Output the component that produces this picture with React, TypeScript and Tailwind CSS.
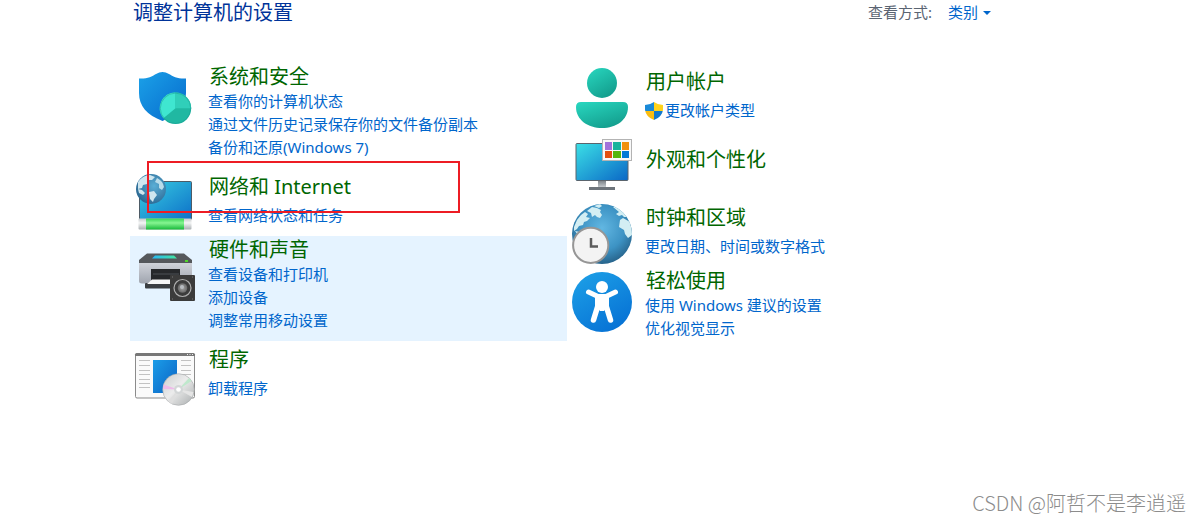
import React from 'react';

type CategoryData = {
  id: string;
  title: string;
  icon: React.ReactNode;
  links: string[];
  active?: boolean;
  marked?: boolean;
  shield?: boolean;
};

const Icon: React.FC<{ children: React.ReactNode }> = ({ children }) => (
  <svg
    viewBox="0 0 60 60"
    className="mt-1 h-[60px] w-[60px] shrink-0 overflow-visible"
    aria-hidden="true"
  >
    {children}
  </svg>
);

const SecurityIcon = () => (
  <Icon>
    <defs>
      <linearGradient id="sec-shield" x1="0" y1="0" x2="1" y2="1">
        <stop offset="0" stopColor="#1ba1e8" />
        <stop offset="1" stopColor="#0669cc" />
      </linearGradient>
    </defs>
    <path
      d="M4 11.5C12 12 17 9.500 21 7Q27.500 3 34 7C38 9.500 43 12 51 11.500V26C51 39 42 48 27.500 54C12 48 4 39 4 26Z"
      fill="url(#sec-shield)"
    />
    <circle cx="40.500" cy="41.300" r="15.700" fill="#20b8a2" />
    <path d="M40.500 41.300V25.600A15.700 15.700 0 0 0 28.400 51.300Z" fill="#3fe6d0" />
    <path d="M40.500 41.300V25.600A15.700 15.700 0 0 1 56.200 41.300Z" fill="#30cfb9" />
    <circle cx="40.500" cy="41.300" r="15.200" fill="none" stroke="#1a9c92" strokeOpacity="0.5" />
  </Icon>
);

const NetworkIcon = () => (
  <Icon>
    <defs>
      <linearGradient id="net-screen" x1="0" y1="0" x2="1" y2="1">
        <stop offset="0" stopColor="#39cfe2" />
        <stop offset="1" stopColor="#0d70c8" />
      </linearGradient>
      <radialGradient id="net-globe" cx="0.6" cy="0.4" r="0.65">
        <stop offset="0" stopColor="#5aaed6" />
        <stop offset="1" stopColor="#2b6792" />
      </radialGradient>
      <linearGradient id="net-pipe" x1="0" y1="0" x2="0" y2="1">
        <stop offset="0" stopColor="#3ad457" />
        <stop offset="0.4" stopColor="#86f592" />
        <stop offset="1" stopColor="#18b93a" />
      </linearGradient>
      <linearGradient id="net-cap" x1="0" y1="0" x2="0" y2="1">
        <stop offset="0" stopColor="#c5c9cb" />
        <stop offset="0.4" stopColor="#f4f5f5" />
        <stop offset="1" stopColor="#aab0b3" />
      </linearGradient>
    </defs>
    <rect x="4.500" y="9.500" width="52" height="38" rx="1" fill="url(#net-screen)" stroke="#4d5b66" />
    <circle cx="16" cy="17" r="15" fill="url(#net-globe)" />
    <path d="M3 10Q8 3 15 3L20 5 17 8 14 8 12 12 8 13 7 16 3 17Z" fill="#cfe6ef" />
    <path d="M14 20L19 19 22 23 19 27 18 30 15 27Z" fill="#cfe6ef" />
    <path d="M3 17L7 18 10 21 8 23 4 21Z" fill="#cfe6ef" />
    <path d="M22 6Q28 9 29 15L27 18 24 16 24 12 20 10Z" fill="#b9dcea" />
    <rect x="3.500" y="46.500" width="53" height="11" rx="1" fill="url(#net-cap)" />
    <rect x="11" y="46.500" width="38" height="11" fill="url(#net-pipe)" />
  </Icon>
);

const HardwareIcon = () => (
  <Icon>
    <defs>
      <linearGradient id="hw-body" x1="0" y1="0" x2="0" y2="1">
        <stop offset="0" stopColor="#d0d3da" />
        <stop offset="1" stopColor="#9fa4ae" />
      </linearGradient>
      <linearGradient id="hw-slot" x1="0" y1="0" x2="1" y2="0">
        <stop offset="0" stopColor="#27b8f5" />
        <stop offset="1" stopColor="#43e6a0" />
      </linearGradient>
      <radialGradient id="hw-cone">
        <stop offset="0" stopColor="#a8a8a8" />
        <stop offset="1" stopColor="#686868" />
      </radialGradient>
    </defs>
    <path d="M12 13.500H49L57 20V24H4V20Z" fill="#55585c" />
    <path d="M20 15.500H39L42 18.500H17Z" fill="url(#hw-slot)" />
    <path d="M4 23H57V41Q57 43.500 54 43.500H7Q4 43.500 4 41Z" fill="url(#hw-body)" />
    <rect x="50" y="20" width="3" height="2" fill="#4fd52a" />
    <rect x="10" y="43" width="40" height="5.500" rx="1" fill="#3b3e42" />
    <path d="M16 29H45V41H16Z" fill="#26282b" />
    <path d="M18 33H44V35H18Z" fill="#393c40" />
    <path d="M17 39.500H44V44H12Z" fill="#f6f6f6" />
    <rect x="35" y="35" width="25" height="26" rx="1" fill="#3b3b3b" />
    <circle cx="47.500" cy="48" r="8.500" fill="#3c3c3c" stroke="#b0b0b0" strokeWidth="1.200" />
    <circle cx="47.500" cy="48" r="4.800" fill="url(#hw-cone)" />
    <circle cx="47" cy="47" r="2" fill="#b9bdc2" />
    <path d="M37 37h1M57 37h1M37 59h1M57 59h1" stroke="#777" />
  </Icon>
);

const ProgramsIcon = () => (
  <Icon>
    <defs>
      <linearGradient id="prg-page" x1="0" y1="0" x2="1" y2="1">
        <stop offset="0" stopColor="#1b9de8" />
        <stop offset="1" stopColor="#0b62c4" />
      </linearGradient>
      <linearGradient id="prg-disc" x1="0" y1="0" x2="1" y2="1">
        <stop offset="0" stopColor="#c9cccd" />
        <stop offset="0.45" stopColor="#ececec" />
        <stop offset="1" stopColor="#a9adae" />
      </linearGradient>
    </defs>
    <rect x="0.500" y="8.500" width="59" height="44.500" rx="1.500" fill="#fafafa" stroke="#8b8b8b" />
    <path d="M0 11V9.500Q0 8 2 8H58Q60 8 60 9.500V11Z" fill="#777" />
    <path d="M52 9.500h1M54.500 9.500h1M57 9.500h1" stroke="#eee" />
    <path
      d="M4 15.500H15M4 20.500H15M4 25.500H15M4 29.500H15M4 34.500H15M4 38.500H15M4 42.500H15M46 15.500H56M46 20.500H56M46 25.500H56M46 29.500H56"
      stroke="#c2c2c2"
    />
    <rect x="18" y="15" width="24" height="33" fill="url(#prg-page)" />
    <circle cx="43.500" cy="44.500" r="15.800" fill="url(#prg-disc)" stroke="#a5a8a9" strokeWidth="0.600" />
    <path d="M43.500 44.500L28.500 39.500 28 44Z" fill="#eebbe9" />
    <path d="M43.500 44.500L54 33 56.500 36Z" fill="#bfe8cc" />
    <path d="M43.500 44.500L58.500 47 57 52Z" fill="#e5e5e5" />
    <path d="M43.500 44.500L33 56 37 59Z" fill="#dedede" />
    <circle cx="43.500" cy="44.500" r="4.500" fill="#d3d6d7" />
    <circle cx="43.500" cy="44.500" r="2.300" fill="#fff" />
  </Icon>
);

const UserIcon = () => (
  <Icon>
    <defs>
      <linearGradient id="usr" x1="0.200" y1="0" x2="0.800" y2="1">
        <stop offset="0" stopColor="#27d3bc" />
        <stop offset="1" stopColor="#129a8a" />
      </linearGradient>
    </defs>
    <circle cx="30" cy="16" r="15" fill="url(#usr)" />
    <path d="M9 35H51Q56 35 56 40C56 53 44 61 30 61C16 61 4 53 4 40Q4 35 9 35Z" fill="url(#usr)" />
  </Icon>
);

const AppearanceIcon = () => (
  <Icon>
    <defs>
      <linearGradient id="app-screen" x1="0" y1="0" x2="1" y2="1">
        <stop offset="0" stopColor="#3be0e6" />
        <stop offset="1" stopColor="#0a67c6" />
      </linearGradient>
      <linearGradient id="app-neck" x1="0" y1="0" x2="0" y2="1">
        <stop offset="0" stopColor="#7f858b" />
        <stop offset="1" stopColor="#c3c8cc" />
      </linearGradient>
    </defs>
    <rect x="26" y="46" width="8" height="6" fill="url(#app-neck)" />
    <rect x="17" y="52" width="26" height="3" fill="#6d747b" />
    <rect x="4" y="8.500" width="52" height="37" rx="1" fill="url(#app-screen)" stroke="#5a646d" />
    <rect x="30.500" y="4.500" width="29" height="21" fill="#f8f8f8" stroke="#b3b3b3" />
    <path d="M33 7h7v8h-7z" fill="#a173da" />
    <path d="M41 7h8v8h-8z" fill="#18b39d" />
    <path d="M50 7h7v8h-7z" fill="#f0900c" />
    <path d="M33 16h7v7h-7z" fill="#e3500f" />
    <path d="M41 16h8v7h-8z" fill="#55b60c" />
    <path d="M50 16h7v7h-7z" fill="#0078d7" />
  </Icon>
);

const ClockIcon = () => (
  <Icon>
    <defs>
      <radialGradient id="clk-globe" cx="0.5" cy="0.4" r="0.62">
        <stop offset="0" stopColor="#62b7e2" />
        <stop offset="0.6" stopColor="#3d93c4" />
        <stop offset="1" stopColor="#255f86" />
      </radialGradient>
      <clipPath id="clk-clip">
        <circle cx="30" cy="31" r="30" />
      </clipPath>
    </defs>
    <circle cx="30" cy="31" r="30" fill="url(#clk-globe)" />
    <g clipPath="url(#clk-clip)" fill="#d3eef3">
      <path d="M2 24L5 17 9 12 13 9 16 11 14 14 18 15 15 18 12 19 11 22 7 23 5 26 2 28Z" />
      <path d="M15 8L20 4 25 5 29 7 28 9 30 12 28 15 25 14 23 12 20 14 19 10Z" />
      <path d="M22 3L28 1 30 3 27 5Z" />
      <path d="M41 4L47 4 52 9 55 14 52 14 50 12 47 13 44 11 47 9Z" />
      <path d="M48 17L51 15 58 19 60 28 60 32 56 35 53 31 52 27 47 24Z" />
      <path d="M3 28L8 29 10 31 6 32Z" />
    </g>
    <circle cx="18.700" cy="42.300" r="17.600" fill="#f3f3f3" stroke="#969696" strokeWidth="2" />
    <path d="M19 35V43.500H26" fill="none" stroke="#5c5c5c" strokeWidth="2.500" />
  </Icon>
);

const AccessIcon = () => (
  <Icon>
    <defs>
      <linearGradient id="acc" x1="0.200" y1="0" x2="0.800" y2="1">
        <stop offset="0" stopColor="#1c9ee6" />
        <stop offset="1" stopColor="#0670d4" />
      </linearGradient>
    </defs>
    <circle cx="30" cy="31" r="30" fill="url(#acc)" />
    <circle cx="30" cy="16" r="6" fill="#fff" />
    <path
      d="M16.500 21L26 25.500H34L43.500 21"
      fill="none"
      stroke="#fff"
      strokeWidth="5"
      strokeLinecap="round"
      strokeLinejoin="round"
    />
    <path d="M23 24H37V38H23Z" fill="#fff" />
    <path
      d="M25.500 36L21.500 49M34.500 36L38.500 49"
      stroke="#fff"
      strokeWidth="5.500"
      strokeLinecap="round"
    />
    <path d="M25 36H35L32 40H28Z" fill="#fff" />
  </Icon>
);

const AdminShield = () => (
  <svg viewBox="0 0 18 18" className="h-[18px] w-[18px] shrink-0" aria-hidden="true">
    <defs>
      <clipPath id="uac">
        <path d="M0 3Q5 3 9 0Q13 3 18 3V8Q17 15 9 18Q1 15 0 8Z" />
      </clipPath>
    </defs>
    <g clipPath="url(#uac)">
      <path d="M0 0h9v9H0z" fill="#1a8ad8" />
      <path d="M9 0h9v9H9z" fill="#ffd31c" />
      <path d="M0 9h9v9H0z" fill="#fbbd12" />
      <path d="M9 9h9v9H9z" fill="#1479cc" />
    </g>
  </svg>
);

const leftCategories: CategoryData[] = [
  {
    id: 'security',
    title: '系统和安全',
    icon: <SecurityIcon />,
    links: ['查看你的计算机状态', '通过文件历史记录保存你的文件备份副本', '备份和还原(Windows 7)'],
  },
  {
    id: 'network',
    title: '网络和 Internet',
    icon: <NetworkIcon />,
    links: ['查看网络状态和任务'],
    marked: true,
  },
  {
    id: 'hardware',
    title: '硬件和声音',
    icon: <HardwareIcon />,
    links: ['查看设备和打印机', '添加设备', '调整常用移动设置'],
    active: true,
  },
  {
    id: 'programs',
    title: '程序',
    icon: <ProgramsIcon />,
    links: ['卸载程序'],
  },
];

const rightCategories: CategoryData[] = [
  {
    id: 'accounts',
    title: '用户帐户',
    icon: <UserIcon />,
    links: ['更改帐户类型'],
    shield: true,
  },
  { id: 'appearance', title: '外观和个性化', icon: <AppearanceIcon />, links: [] },
  {
    id: 'clock',
    title: '时钟和区域',
    icon: <ClockIcon />,
    links: ['更改日期、时间或数字格式'],
  },
  {
    id: 'access',
    title: '轻松使用',
    icon: <AccessIcon />,
    links: ['使用 Windows 建议的设置', '优化视觉显示'],
  },
];

const textSpacing = (count: number) => {
  if (count === 0) return 'pt-[15px]';
  if (count === 1) return 'gap-1 pt-[5px]';
  return '';
};

const Category: React.FC<{ item: CategoryData }> = ({ item }) => (
  <section
    className={`relative flex min-h-[68px] gap-[13px] pl-[5px] ${
      item.active ? 'bg-[#e5f3ff]' : ''
    }`}
  >
    {item.icon}
    <div className={`flex flex-col pb-[9px] ${textSpacing(item.links.length)}`}>
      <h2 className="pl-px text-[20px] leading-[27px] text-[#006600]">
        <a href={`#${item.id}`}>{item.title}</a>
      </h2>
      {item.links.length > 0 && (
        <ul className="text-[15px] leading-[23px] text-[#0066cc]">
          {item.links.map((link) => (
            <li key={link} className="flex items-center gap-0.5">
              {item.shield && <AdminShield />}
              <a href={`#${item.id}`} className="whitespace-nowrap hover:underline">
                {link}
              </a>
            </li>
          ))}
        </ul>
      )}
    </div>
    {item.marked && (
      <div className="pointer-events-none absolute -top-[7px] left-[17px] h-[52px] w-[313px] border-2 border-[#ed1c24]" />
    )}
  </section>
);

const App: React.FC = () => {
  return (
    <div className="flex min-h-screen flex-col bg-white font-['Noto_Sans','Noto_Sans_CJK_SC',sans-serif]">
      <main className="ml-[130px] max-w-[874px]">
        <header className="flex h-[63px] items-start justify-between pr-[13px] pl-[3px]">
          <h1 className="text-[20px] leading-[25px] text-[#003399]">调整计算机的设置</h1>
          <div className="flex text-[15px] leading-[25px]">
            <span id="view-label" className="mr-4 text-[#5a6472]">
              查看方式:
            </span>
            <button
              type="button"
              aria-labelledby="view-label view-value"
              className="flex items-center gap-[5px] text-[#0066cc]"
            >
              <span id="view-value">类别</span>
              <svg viewBox="0 0 8 4" className="h-1 w-2" aria-hidden="true">
                <path d="M0 0H8L4 4Z" fill="#0066cc" />
              </svg>
            </button>
          </div>
        </header>

        <div className="grid grid-cols-2 items-start">
          <div>
            {leftCategories.map((item) => (
              <Category key={item.id} item={item} />
            ))}
          </div>
          <div>
            {rightCategories.map((item) => (
              <Category key={item.id} item={item} />
            ))}
          </div>
        </div>
      </main>

      <footer className="mt-auto pr-[14px] pb-[5px] text-right font-['Noto_Sans_CJK_SC',sans-serif] text-[20px] leading-[30px] font-light text-[#8c8c8c]">
        CSDN @阿哲不是李逍遥
      </footer>
    </div>
  );
};

export default App;
